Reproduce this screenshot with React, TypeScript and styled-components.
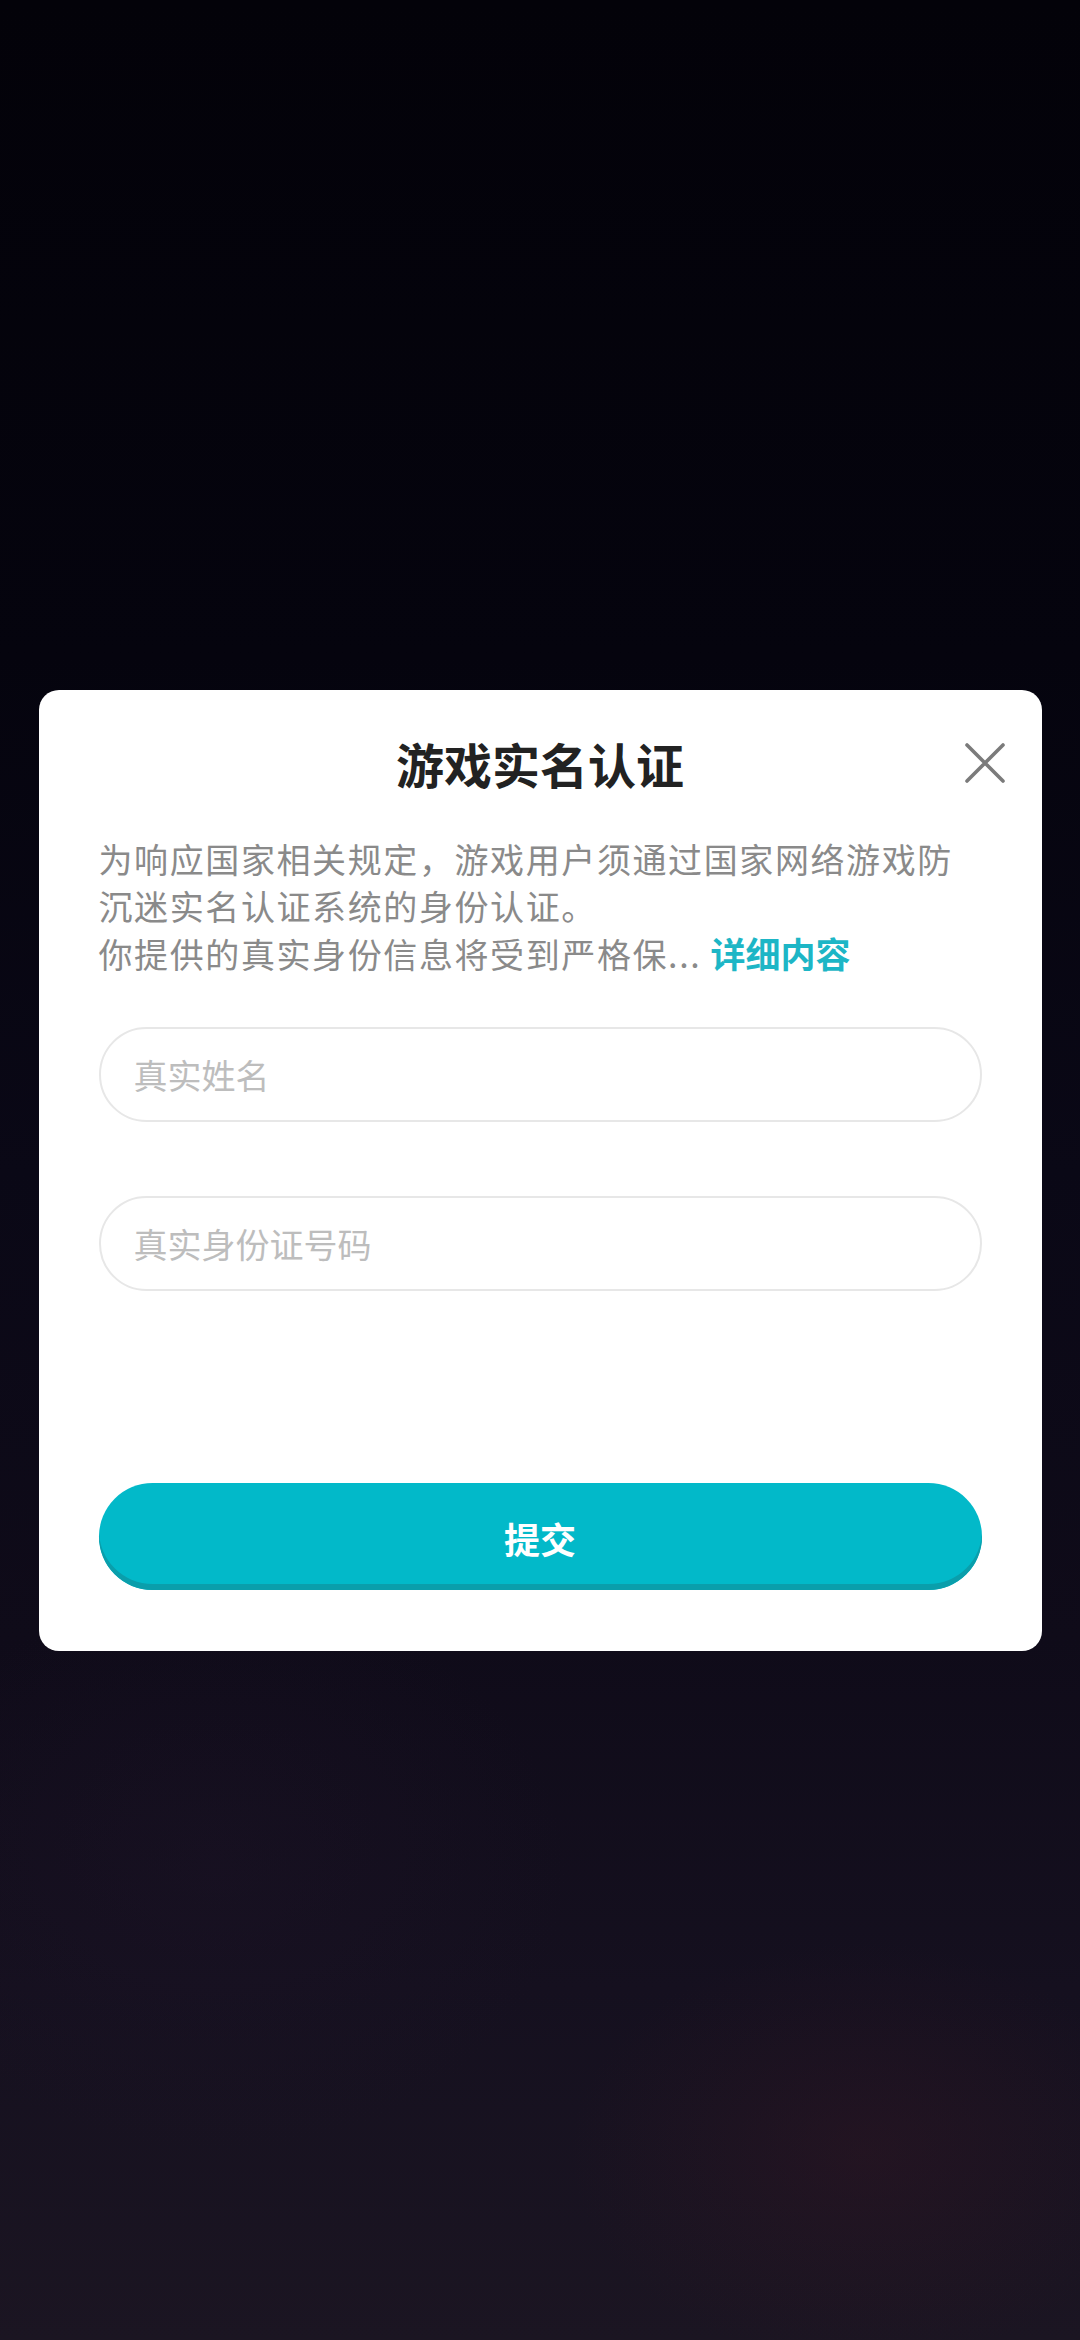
import React, { useState } from 'react'
import styled, { createGlobalStyle } from 'styled-components'

const GlobalStyle = createGlobalStyle`
  html, body {
    margin: 0;
    padding: 0;
  }
  body {
    font-family: "Noto Sans CJK SC", "Noto Sans", sans-serif;
    background: #05040e;
  }
`

export default function App() {
  const [name, setName] = useState("")
  const [idNo, setIdNo] = useState("")

  return (<Screen>
    <GlobalStyle/>
    <Dialog>
      <CloseButton aria-label="关闭">
        <svg width="40" height="40" viewBox="0 0 40 40">
          <path d="M2 2 L38 38 M38 2 L2 38" stroke="#7b7b7b" strokeWidth="3.6" strokeLinecap="round"/>
        </svg>
      </CloseButton>
      <Title>游戏实名认证</Title>
      <Notice>
        为响应国家相关规定，游戏用户须通过国家网络游戏防沉迷实名认证系统的身份认证。
        <br/>
        你提供的真实身份信息将受到严格保... <DetailLink>详细内容</DetailLink>
      </Notice>
      <Fields>
        <Field value={name} onChange={e => setName(e.target.value)} placeholder="真实姓名"/>
        <Field value={idNo} onChange={e => setIdNo(e.target.value)} placeholder="真实身份证号码"/>
      </Fields>
      <SubmitButton>提交</SubmitButton>
    </Dialog>
  </Screen>)
}

const Screen = styled.div`
  min-height: 100vh;
  display: flex;
  align-items: center;
  justify-content: center;
  background:
    radial-gradient(ellipse 420px 300px at 80% 92%, rgba(60, 24, 36, 0.3), transparent 70%),
    radial-gradient(ellipse 500px 400px at 20% 80%, rgba(30, 20, 40, 0.35), transparent 70%),
    linear-gradient(180deg, #030209 0%, #05040e 28%, #0a0816 50%, #0f0b19 70%, #15101f 85%, #1b1522 100%);
`

const Dialog = styled.div`
  position: relative;
  width: 1003px;
  box-sizing: border-box;
  padding: 41px 60px 61px;
  background: #ffffff;
  border-radius: 20px;
  display: flex;
  flex-direction: column;
`

const CloseButton = styled.button`
  position: absolute;
  top: 52px;
  right: 36px;
  width: 42px;
  height: 42px;
  padding: 1px;
  border: none;
  background: transparent;
  display: flex;
  align-items: center;
  justify-content: center;
`

const Title = styled.h2`
  margin: 0;
  text-align: center;
  font-size: 48px;
  line-height: 64px;
  font-weight: 700;
  color: #222222;
`

const Notice = styled.p`
  margin: 40px 0 0;
  font-size: 34px;
  line-height: 47px;
  letter-spacing: 1.6px;
  color: #8a8a8a;
`

const DetailLink = styled.span`
  color: #1db6c6;
  font-size: 35px;
  font-weight: 700;
  letter-spacing: 0;
`

const Fields = styled.div`
  margin-top: 50px;
  display: flex;
  flex-direction: column;
  gap: 74px;
`

const Field = styled.input`
  height: 95px;
  box-sizing: border-box;
  padding: 0 33px;
  border: 2px solid #e7e7e7;
  border-radius: 48px;
  outline: none;
  font-family: inherit;
  font-size: 34px;
  color: #333333;
  background: #ffffff;
  &::placeholder {
    color: #bdbdbd;
  }
`

const SubmitButton = styled.button`
  margin-top: 192px;
  height: 107px;
  border: none;
  border-radius: 54px;
  background: #02b9c9;
  box-shadow: inset 0 -6px 0 #0a9eab;
  color: #ffffff;
  font-family: inherit;
  font-size: 36px;
  font-weight: 700;
  padding-top: 4px;
`
